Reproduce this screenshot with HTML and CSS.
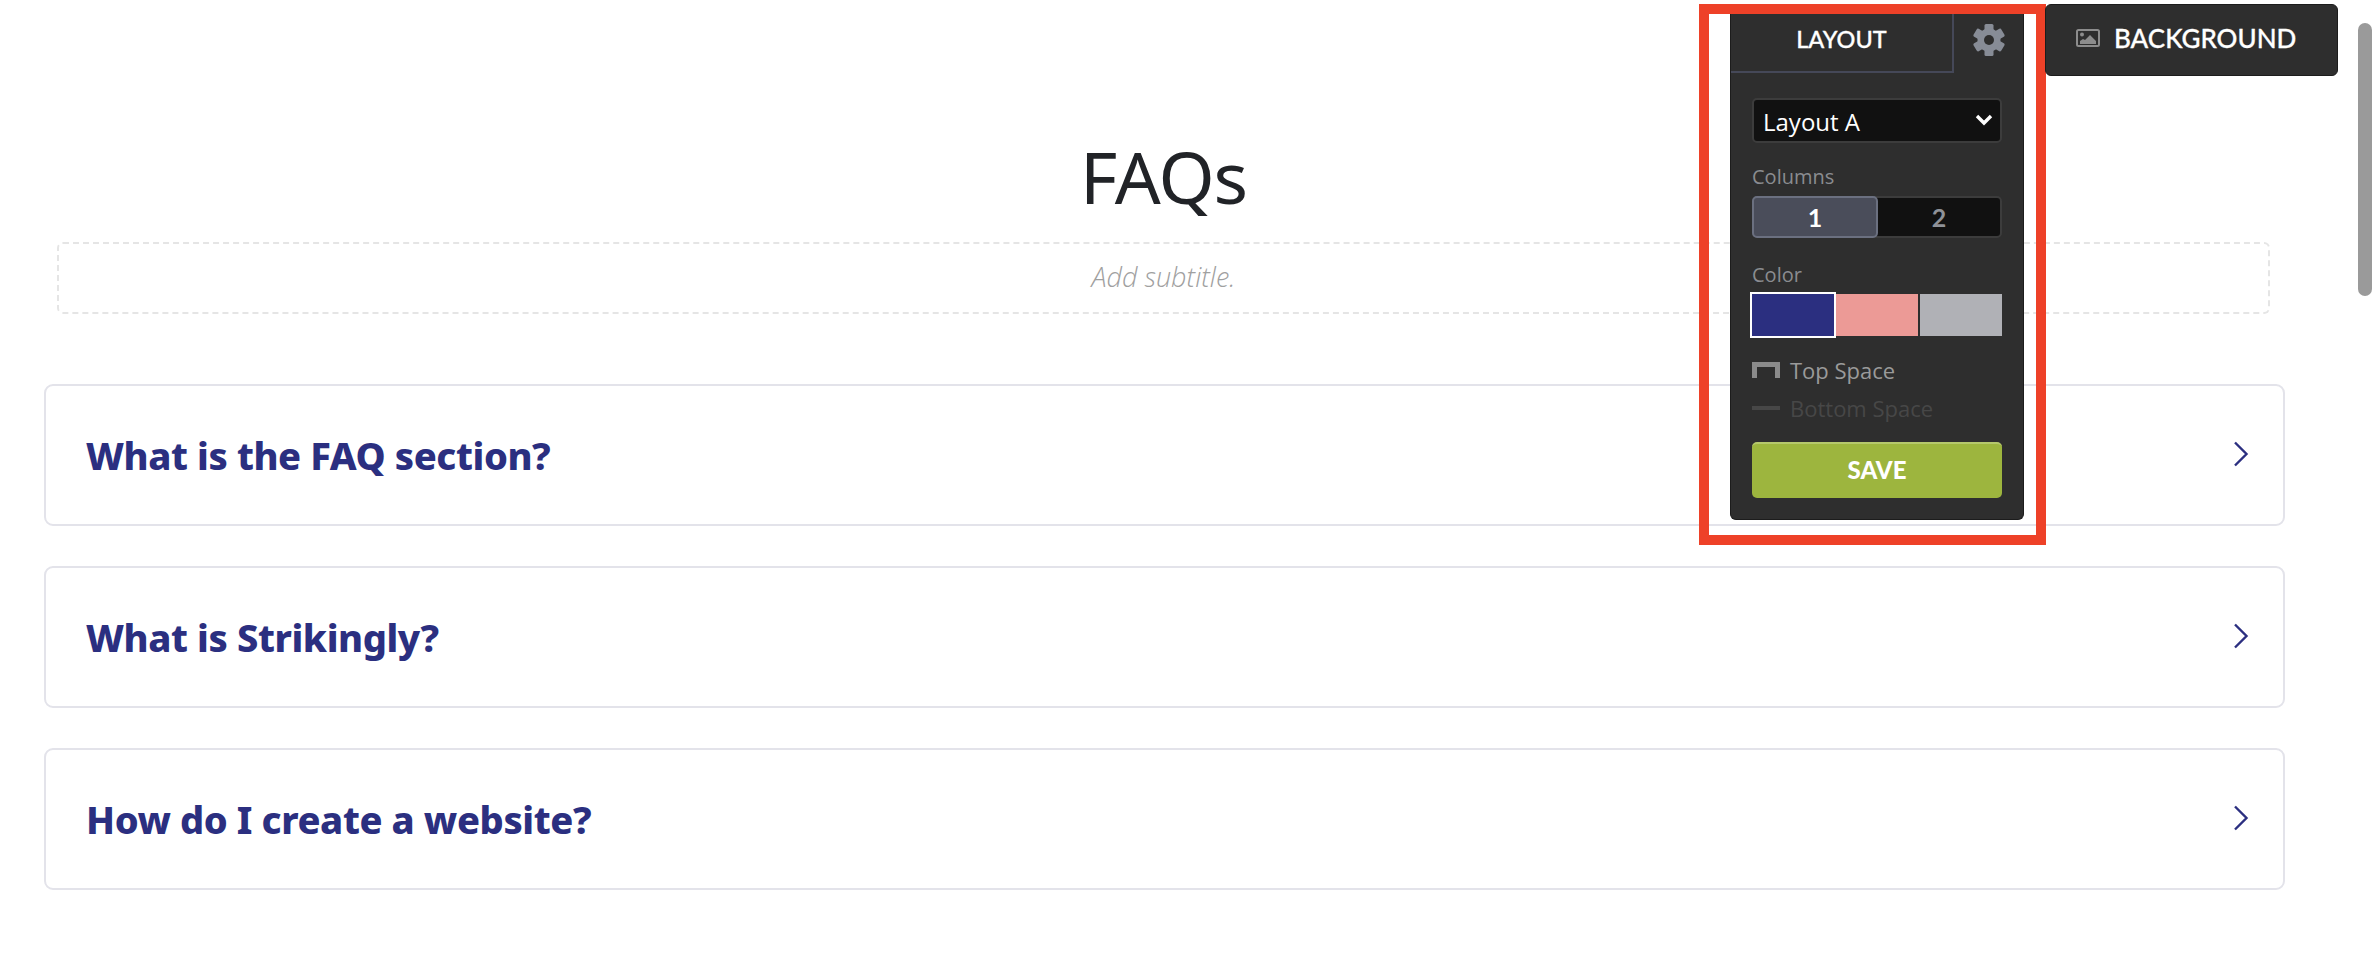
FILE: index.html
```html
<!DOCTYPE html>
<html lang="en">
<head>
    <meta charset="UTF-8">
    <title>FAQs</title>
    <link rel="stylesheet" href="styles.css">
</head>
<body>
    <div class="page">
        <h1 class="title">FAQs</h1>
        <div class="subtitle">Add subtitle.</div>
        <div class="faq-list">
            <div class="faq-item">
                <span class="question">What is the FAQ section?</span>
                <svg class="arrow" width="16" height="26" viewBox="0 0 16 26"><path d="M2 1.500l11.500 11.500L2 24.500" fill="none" stroke="#2b2f80" stroke-width="2.400"/></svg>
            </div>
            <div class="faq-item">
                <span class="question">What is Strikingly?</span>
                <svg class="arrow" width="16" height="26" viewBox="0 0 16 26"><path d="M2 1.500l11.500 11.500L2 24.500" fill="none" stroke="#2b2f80" stroke-width="2.400"/></svg>
            </div>
            <div class="faq-item">
                <span class="question">How do I create a website?</span>
                <svg class="arrow" width="16" height="26" viewBox="0 0 16 26"><path d="M2 1.500l11.500 11.500L2 24.500" fill="none" stroke="#2b2f80" stroke-width="2.400"/></svg>
            </div>
        </div>
    </div>

    <!-- highlight frame + editor panel sit over the page -->
    <div class="frame"></div>
    <div class="panel">
        <div class="tabs">
            <div class="tab">LAYOUT</div>
            <div class="tab-gear">
                <svg width="32" height="32" viewBox="-16 -16 32 32">
                    <g fill="#878c96">
                        <rect x="-4.500" y="-16" width="9" height="32" rx="1.500"/>
                        <rect x="-4.500" y="-16" width="9" height="32" rx="1.500" transform="rotate(60)"/>
                        <rect x="-4.500" y="-16" width="9" height="32" rx="1.500" transform="rotate(120)"/>
                        <circle r="11.500"/>
                    </g>
                    <circle r="5" fill="#2e2e2e"/>
                </svg>
            </div>
        </div>
        <div class="panel-body">
            <div class="select">
                <span>Layout A</span>
                <svg width="18" height="12" viewBox="0 0 18 12"><path d="M2 2l7 7 7-7" fill="none" stroke="#fff" stroke-width="3.400"/></svg>
            </div>
            <div class="label label-columns">Columns</div>
            <div class="toggle">
                <div class="toggle-btn active">1</div>
                <div class="toggle-btn">2</div>
            </div>
            <div class="label label-color">Color</div>
            <div class="swatches">
                <div class="swatch swatch-blue"></div>
                <div class="swatch swatch-pink"></div>
                <div class="swatch swatch-gray"></div>
            </div>
            <div class="space-row">
                <span class="icon-top"></span>
                <span>Top Space</span>
            </div>
            <div class="space-row off">
                <span class="icon-bottom"></span>
                <span>Bottom Space</span>
            </div>
            <div class="save">SAVE</div>
        </div>
    </div>
    <div class="bg-btn">
        <svg width="24" height="18" viewBox="0 0 24 18"><rect x="1" y="1" width="22" height="16" rx="1.500" fill="none" stroke="#8c8c8c" stroke-width="2"/><circle cx="6" cy="5.500" r="2" fill="#8c8c8c"/><path d="M4 15v-3l3-2 2 1 5-5 6 6v3z" fill="#8c8c8c"/></svg>
        <span>BACKGROUND</span>
    </div>
    <div class="scroll-thumb"></div>
</body>
</html>
```

FILE: styles.css
```css
* {
    margin: 0;
    padding: 0;
    box-sizing: border-box;
}
html, body {
    height: 100%;
    overflow: hidden;
    background: #fff;
}
body {
    font-family: "Open Sans", sans-serif;
}
.page {
    padding: 137px 87px 0 44px;
}
.title {
    font-family: "Noto Sans", sans-serif;
    font-size: 72px;
    font-weight: 400;
    letter-spacing: -1px;
    line-height: 78px;
    height: 105px;
    padding-right: 2px;
    text-align: center;
    color: #212327;
}
.subtitle {
    margin: 0 15px 0 13px;
    height: 72px;
    border: 2px dashed #e5e5e5;
    border-radius: 6px;
    line-height: 66px;
    text-align: center;
    font-size: 27px;
    font-weight: 300;
    font-style: italic;
    color: #a0a0a0;
}
.faq-list {
    margin-top: 70px;
    display: flex;
    flex-direction: column;
    gap: 40px;
}
.faq-item {
    height: 142px;
    border: 2px solid #e3e3ea;
    border-radius: 9px;
    padding: 0 34px 0 40px;
    display: flex;
    align-items: center;
    justify-content: space-between;
}
.question {
    font-family: "Noto Sans", sans-serif;
    font-size: 38px;
    font-weight: 800;
    letter-spacing: -0.400px;
    color: #2b2f80;
}
.arrow {
    margin-top: -2px;
}

/* red frame */
.frame {
    position: absolute;
    left: 1699px;
    top: 4px;
    width: 347px;
    height: 541px;
    border: 10px solid #ee4128;
}

/* panel */
.panel {
    position: absolute;
    left: 1730px;
    top: 14px;
    width: 294px;
    height: 506px;
    background: #2e2e2e;
    border: 1px solid #1c1c1c;
    border-top: 0;
    border-radius: 0 0 6px 6px;
}
.tabs {
    display: flex;
    height: 59px;
}
.tab {
    width: 223px;
    height: 59px;
    border-right: 2px solid #454858;
    border-bottom: 2px solid #454858;
    color: #fff;
    font-family: Lato, sans-serif;
    font-size: 23.500px;
    font-weight: 500;
    -webkit-text-stroke: 0.300px #fff;
    line-height: 51px;
    text-align: center;
}
.tab-gear {
    flex: 1;
    display: flex;
    justify-content: center;
    padding-top: 10px;
}
.panel-body {
    padding: 25px 21px 0;
}
.select {
    height: 45px;
    background: #111;
    border: 2px solid #3c3c3c;
    border-radius: 5px;
    padding: 2px 7px 0 9px;
    display: flex;
    align-items: center;
    justify-content: space-between;
    color: #fff;
    font-size: 24px;
}
.select svg {
    margin-top: -4px;
}
.label {
    color: #8a8c90;
    font-size: 20px;
    line-height: 28px;
}
.label-columns {
    margin-top: 20px;
}
.label-color {
    margin-top: 23px;
}
.toggle {
    display: flex;
    height: 42px;
    margin-top: 5px;
    background: #111;
    border: 2px solid #3c3c3c;
    border-radius: 5px;
}
.toggle-btn {
    flex: 1;
    display: flex;
    align-items: center;
    justify-content: center;
    color: #8f9298;
    font-family: Lato, sans-serif;
    font-size: 25px;
    font-weight: 700;
}
.toggle-btn.active {
    flex: none;
    width: 126px;
    margin: -2px 0 -2px -2px;
    background: #4a4d5a;
    border: 2px solid #6b7080;
    border-radius: 5px;
    color: #fff;
}
.swatches {
    display: flex;
    gap: 2px;
    height: 42px;
    margin-top: 5px;
}
.swatch {
    flex: 1;
}
.swatch-blue {
    background: #2b2f80;
    outline: 2px solid #fff;
}
.swatch-pink {
    background: #ec9a96;
}
.swatch-gray {
    background: #b0b1b6;
}
.space-row {
    display: flex;
    align-items: center;
    gap: 10px;
    height: 38px;
    font-size: 22px;
    color: #9a9a9a;
}
.swatches + .space-row {
    margin-top: 15px;
}
.space-row.off {
    color: #474747;
}
.icon-top {
    width: 28px;
    height: 16px;
    border: 5px solid #8b8b8b;
    border-bottom: 0;
}
.icon-bottom {
    width: 28px;
    height: 4px;
    background: #474747;
}
.save {
    height: 56px;
    margin-top: 15px;
    background: #9db53e;
    border-top: 2px solid #b5c86b;
    border-radius: 5px;
    color: #fff;
    font-family: Lato, sans-serif;
    font-size: 24px;
    font-weight: 900;
    line-height: 52px;
    text-align: center;
}

.bg-btn {
    position: absolute;
    left: 2045px;
    top: 4px;
    width: 293px;
    height: 72px;
    background: #2e2e2e;
    border: 1px solid #1c1c1c;
    border-radius: 6px;
    display: flex;
    align-items: center;
    gap: 14px;
    padding: 0 0 4px 30px;
    color: #fff;
    font-family: Lato, sans-serif;
    font-size: 26px;
    font-weight: 500;
    -webkit-text-stroke: 0.300px #fff;
}
.scroll-thumb {
    position: absolute;
    left: 2358px;
    top: 23px;
    width: 14px;
    height: 273px;
    background: #9a9a9a;
    border-radius: 7px;
}
```
